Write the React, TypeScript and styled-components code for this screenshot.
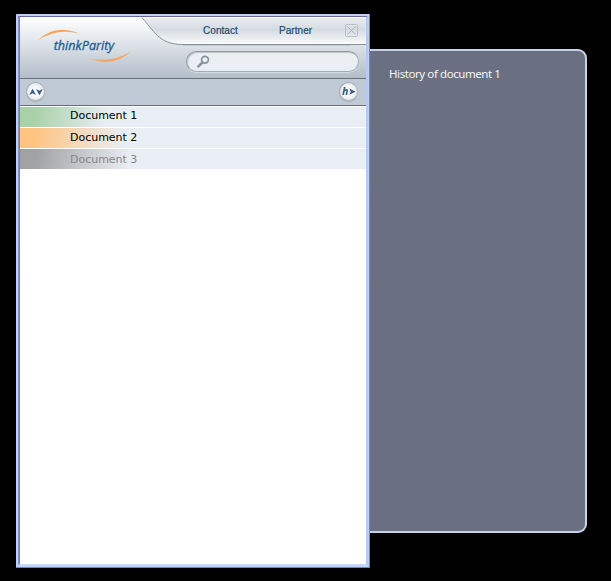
import React from "react";
import styled, { createGlobalStyle } from "styled-components";

const GlobalStyle = createGlobalStyle`
  html, body { margin: 0; padding: 0; background: #000; }
  * { box-sizing: border-box; }
  button { padding: 0; border: 0; background: none; font: inherit; }
`;

const Desktop = styled.main`
  display: flex;
  align-items: flex-start;
  width: 611px;
  height: 581px;
  padding: 14px 0 0 16px;
  overflow: hidden;
  background: #000;
`;

const Window = styled.section`
  display: flex;
  flex-direction: column;
  width: 354px;
  height: 554px;
  padding: 2px;
  background: linear-gradient(180deg, #c3cdf8, #bccffd 50%);
  border-radius: 1px;
  box-shadow: inset -1px -1px 0 #7587b8;
`;

const Frame = styled.div`
  display: flex;
  flex-direction: column;
  flex: 1;
  border-style: solid;
  border-width: 1px 2px 2px 1px;
  border-color: #646b9c #b5c8fb #c5d8ff #8594c8;
  box-shadow: inset 1px 0 0 #7581ae;
  padding: 1px 0 0 1px;
  background: #fff;
`;

const Header = styled.header`
  position: relative;
  display: flex;
  height: 60px;
  background: linear-gradient(180deg, #fdfefe 0%, #e5e9ed 35%, #c9d1d9 70%, #b3bfcb 100%);
`;

const HeaderCurve = styled.svg`
  position: absolute;
  inset: 0;
`;

const Logo = styled.svg`
  position: relative;
  width: 160px;
  height: 60px;
  flex: none;
`;

const HeaderRight = styled.div`
  position: relative;
  display: flex;
  flex-direction: column;
  flex: 1;
`;

const Nav = styled.nav`
  display: flex;
  align-items: center;
  height: 25px;
  padding-left: 23px;
`;

const NavLink = styled.button<{ $width: number }>`
  width: ${(p) => p.$width}px;
  text-align: left;
  font: 10px/14px "Liberation Sans", Arial, sans-serif;
  letter-spacing: 0.05px;
  color: #24486b;
  -webkit-text-stroke: 0.2px #24486b;
`;

const CloseButton = styled.button`
  display: flex;
  width: 13px;
  height: 13px;
`;

const SearchField = styled.div`
  display: flex;
  align-items: center;
  width: 173px;
  height: 21px;
  margin: 8px 0 0 6px;
  padding-left: 10px;
  border: 1px solid #8f999f;
  border-right-color: #a4adb4;
  border-bottom-color: #a4adb3;
  border-radius: 11px;
  background: #ebeff3;
  box-shadow: inset 1px 1px 1px #bdc5ca, 0 1px 0 #d5dbe1;
`;

const Toolbar = styled.div`
  display: flex;
  justify-content: space-between;
  align-items: center;
  height: 28px;
  padding: 0 8px 1px 6px;
  border-top: 1px solid #6e7072;
  border-bottom: 1px solid #6c6d70;
  background: #bfcad6;
`;

const RoundButton = styled.button`
  display: flex;
  align-items: center;
  justify-content: center;
  width: 19px;
  height: 19px;
  border: 1px solid #a2abb5;
  border-right-color: #b4bbc1;
  border-bottom-color: #b4b8ba;
  border-radius: 50%;
  background: radial-gradient(circle, #f5f7f8 45%, #e2e6e9 75%);
  box-shadow: 0 1px 1px #aaaead;
`;

const DocumentList = styled.ul`
  display: flex;
  flex-direction: column;
  gap: 1px;
  margin: 1px 0 0;
  padding: 0;
  list-style: none;
`;

const DocumentRow = styled.li<{ $accent: string; $line: number; $fade: number; $muted?: boolean }>`
  height: 20px;
  padding-left: 50px;
  font: 11px/${(p) => p.$line}px "DejaVu Sans", Verdana, sans-serif;
  letter-spacing: -0.02px;
  color: ${(p) => (p.$muted ? "#85888a" : "#000")};
  background: linear-gradient(100deg, ${(p) => p.$accent} 0, ${(p) => p.$accent} 16px, #e9eef5 ${(p) => p.$fade}px);
`;

const HistoryPanel = styled.aside`
  width: 217px;
  height: 484px;
  margin-top: 35px;
  padding: 15px 0 0 19px;
  border: 2px solid #c5d2e8;
  border-left: 0;
  border-radius: 0 9px 9px 0;
  background: #6a7081;
`;

const HistoryTitle = styled.h2`
  margin: 0;
  font: 400 11.5px/16px "Noto Sans", "Open Sans", sans-serif;
  letter-spacing: -0.42px;
  color: #f4f5f7;
`;

const documents = [
  { name: "Document 1", accent: "#a9d1a8", line: 17, fade: 88 },
  { name: "Document 2", accent: "#ffc482", line: 19, fade: 105 },
  { name: "Document 3", accent: "#a1a2a3", line: 21, fade: 110, muted: true },
];

export default function App() {
  return (
    <Desktop>
      <GlobalStyle />
      <Window>
        <Frame>
          <Header>
            <HeaderCurve width="346" height="60" viewBox="0 0 346 60">
              <defs>
                <linearGradient id="tab" x1="0" y1="0" x2="0" y2="1">
                  <stop offset="0" stopColor="#e9ecf0" />
                  <stop offset="0.45" stopColor="#d5dbe2" />
                  <stop offset="1" stopColor="#fafbfc" />
                </linearGradient>
              </defs>
              <path d="M122 0C134 12 138 26 163 26H346V0Z" fill="url(#tab)" />
              <path d="M122 0C134 12 138 26.5 163 26.5H346" fill="none" stroke="#899198" />
              <path d="M163 27.5H331" stroke="#b9bec3" strokeWidth="0.7" />
            </HeaderCurve>
            <Logo viewBox="0 0 160 60">
              <path d="M18 22.4Q34 5.4 59 15.4Q36 10.2 18 22.4Z" fill="#faa45f" />
              <path d="M69 40.3Q92 45.5 111 33.3Q94 50.2 69 40.3Z" fill="#faa45f" />
              <text
                x="33.7"
                y="32"
                textLength="60.5"
                lengthAdjust="spacingAndGlyphs"
                fontFamily="Open Sans, Noto Sans, sans-serif"
                fontStyle="italic"
                fontWeight="500"
                fontSize="13"
                fill="#1f5f98"
                stroke="#1f5f98"
                strokeWidth="0.35"
              >
                thinkParity
              </text>
            </Logo>
            <HeaderRight>
              <Nav>
                <NavLink $width={76}>Contact</NavLink>
                <NavLink $width={66}>Partner</NavLink>
                <CloseButton aria-label="Close">
                  <svg width="13" height="13" viewBox="0 0 13 13" fill="none" stroke="#bac1c8">
                    <rect x="0.5" y="0.5" width="12" height="12" rx="1" />
                    <path d="M2.5 2.5L10.5 10.5M10.5 2.5L2.5 10.5" stroke="#aeb5bc" />
                  </svg>
                </CloseButton>
              </Nav>
              <SearchField role="search">
                <svg width="13" height="13" viewBox="0 0 13 13" fill="none" stroke="#88929b">
                  <circle cx="8" cy="4.8" r="3.4" strokeWidth="1.7" />
                  <path d="M5.5 7.4L1.4 11.4" strokeWidth="2.5" strokeLinecap="round" />
                </svg>
              </SearchField>
            </HeaderRight>
          </Header>
          <Toolbar>
            <RoundButton aria-label="Sort">
              <svg width="14" height="8" viewBox="0 0 14 8" fill="#365a80">
                <path d="M0.2 7L3.6 0.8L7 7L3.6 5.3Z" />
                <path d="M7 1L10.4 2.7L13.8 1L10.4 7.2Z" />
              </svg>
            </RoundButton>
            <RoundButton aria-label="History">
              <svg width="15" height="13" viewBox="0 0 15 13" fill="#365a80">
                <text x="1" y="10" fontFamily="Open Sans, sans-serif" fontSize="10.5" fontStyle="italic" fontWeight="700">
                  h
                </text>
                <path d="M8.3 3.6L14.5 6.7L8.3 9.8L9.8 6.7Z" />
              </svg>
            </RoundButton>
          </Toolbar>
          <DocumentList>
            {documents.map((d) => (
              <DocumentRow key={d.name} $accent={d.accent} $line={d.line} $fade={d.fade} $muted={d.muted}>
                {d.name}
              </DocumentRow>
            ))}
          </DocumentList>
        </Frame>
      </Window>
      <HistoryPanel>
        <HistoryTitle>History of document 1</HistoryTitle>
      </HistoryPanel>
    </Desktop>
  );
}
